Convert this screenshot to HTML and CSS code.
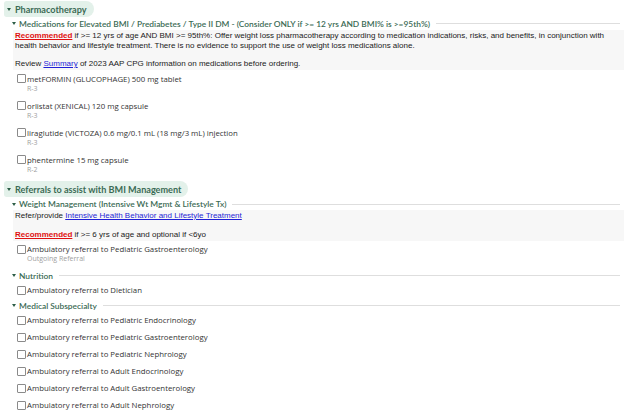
FILE: index.html
```html
<!DOCTYPE html>
<html>
<head>
<meta charset="utf-8">
<link rel="stylesheet" href="styles.css">
</head>
<body>
<div class="page">
  <div class="pill"><span class="tri"></span><span>Pharmacotherapy</span></div>
  <div class="ghead"><span class="tri"></span><span class="gtitle">Medications for Elevated BMI / Prediabetes / Type II DM - (Consider ONLY if &gt;= 12 yrs AND BMI% is &gt;=95th%)</span><span class="rule"></span></div>
  <div class="note">
    <p><span class="rec">Recommended</span> if &gt;= 12 yrs of age AND BMI &gt;= 95th%: Offer weight loss pharmacotherapy according to medication indications, risks, and benefits, in conjunction with health behavior and lifestyle treatment. There is no evidence to support the use of weight loss medications alone.</p>
    <p class="gap">Review <a href="#">Summary</a> of 2023 AAP CPG information on medications before ordering.</p>
  </div>
  <div class="item"><div class="row"><span class="cb"></span><span>metFORMIN (GLUCOPHAGE) 500 mg tablet</span></div><div class="sub">R-3</div></div>
  <div class="item"><div class="row"><span class="cb"></span><span>orlistat (XENICAL) 120 mg capsule</span></div><div class="sub">R-3</div></div>
  <div class="item"><div class="row"><span class="cb"></span><span>liraglutide (VICTOZA) 0.6 mg/0.1 mL (18 mg/3 mL) injection</span></div><div class="sub">R-3</div></div>
  <div class="item"><div class="row"><span class="cb"></span><span>phentermine 15 mg capsule</span></div><div class="sub">R-2</div></div>

  <div class="pill pill2"><span class="tri"></span><span>Referrals to assist with BMI Management</span></div>
  <div class="ghead g-weight"><span class="tri"></span><span class="gtitle">Weight Management (Intensive Wt Mgmt &amp; Lifestyle Tx)</span><span class="rule"></span></div>
  <div class="note">
    <p>Refer/provide <a href="#">Intensive Health Behavior and Lifestyle Treatment</a></p>
    <p class="gap"><span class="rec">Recommended</span> if &gt;= 6 yrs of age and optional if &lt;6yo</p>
  </div>
  <div class="item"><div class="row"><span class="cb"></span><span>Ambulatory referral to Pediatric Gastroenterology</span></div><div class="sub">Outgoing Referral</div></div>

  <div class="ghead g-nutri"><span class="tri"></span><span class="gtitle">Nutrition</span><span class="rule"></span></div>
  <div class="item"><div class="row"><span class="cb"></span><span>Ambulatory referral to Dietician</span></div></div>

  <div class="ghead g-med"><span class="tri"></span><span class="gtitle">Medical Subspecialty</span><span class="rule"></span></div>
  <div class="item"><div class="row"><span class="cb"></span><span>Ambulatory referral to Pediatric Endocrinology</span></div></div>
  <div class="item"><div class="row"><span class="cb"></span><span>Ambulatory referral to Pediatric Gastroenterology</span></div></div>
  <div class="item"><div class="row"><span class="cb"></span><span>Ambulatory referral to Pediatric Nephrology</span></div></div>
  <div class="item"><div class="row"><span class="cb"></span><span>Ambulatory referral to Adult Endocrinology</span></div></div>
  <div class="item"><div class="row"><span class="cb"></span><span>Ambulatory referral to Adult Gastroenterology</span></div></div>
  <div class="item"><div class="row"><span class="cb"></span><span>Ambulatory referral to Adult Nephrology</span></div></div>
</div>
</body>
</html>
```
FILE: styles.css
```css
html, body {
  margin: 0;
  padding: 0;
  background: #ffffff;
}
.page {
  width: 624px;
  font-family: "Open Sans", "Noto Sans", sans-serif;
  color: #333333;
}
.tri {
  display: inline-block;
  width: 0;
  height: 0;
  border-left: 2.5px solid transparent;
  border-right: 2.5px solid transparent;
  border-top: 3.5px solid #2d5e47;
  flex: none;
}
.pill {
  display: flex;
  align-items: center;
  gap: 4px;
  width: fit-content;
  height: 16px;
  margin: 1px 0 0 4px;
  padding: 0 7px 0 3px;
  background: #e3f1ea;
  border-radius: 3px 9px 9px 3px;
  font-family: "Lato", sans-serif;
  font-weight: 700;
  font-size: 9.1px;
  color: #3b6b55;
}
.pill2 {
  margin-top: 3px;
}
.ghead {
  display: flex;
  align-items: center;
  height: 12px;
  margin-top: 0.5px;
  padding-left: 12px;
  gap: 3px;
  font-family: "Lato", sans-serif;
  font-weight: 600;
  font-size: 8.4px;
  color: #3b6b55;
}
.gtitle {
  white-space: nowrap;
}
.rule {
  flex: 1;
  height: 1px;
  background: #dedede;
  margin: 0 4px 0 3px;
}
.g-weight { margin-top: 1px; }
.g-nutri { margin-top: 2px; }
.g-med { margin-top: 1px; }
.note {
  margin-left: 13px;
  padding: 1px 2px 1px 2px;
  background: #f7f7f7;
  font-family: "Liberation Sans", Arial, sans-serif;
  font-size: 8px;
  line-height: 10px;
  color: #1a1a1a;
}
.note p {
  margin: 0;
}
.note p.gap {
  margin-top: 8.5px;
}
.note a {
  color: #1f1fd6;
  text-decoration: underline;
}
.rec {
  color: #e01010;
  font-weight: 700;
  text-decoration: underline;
}
.item {
  padding: 3.5px 0 3.5px 17px;
}
.row {
  display: flex;
  align-items: center;
  height: 10px;
  font-size: 7.8px;
  color: #333333;
  white-space: nowrap;
}
.cb {
  width: 9px;
  height: 9px;
  box-sizing: border-box;
  border: 1px solid #8a8a8a;
  border-radius: 1px;
  background: #ffffff;
  margin-right: 1px;
  flex: none;
}
.sub {
  height: 10px;
  line-height: 10px;
  padding-left: 10px;
  font-size: 7px;
  color: #a0a0a0;
}
```
